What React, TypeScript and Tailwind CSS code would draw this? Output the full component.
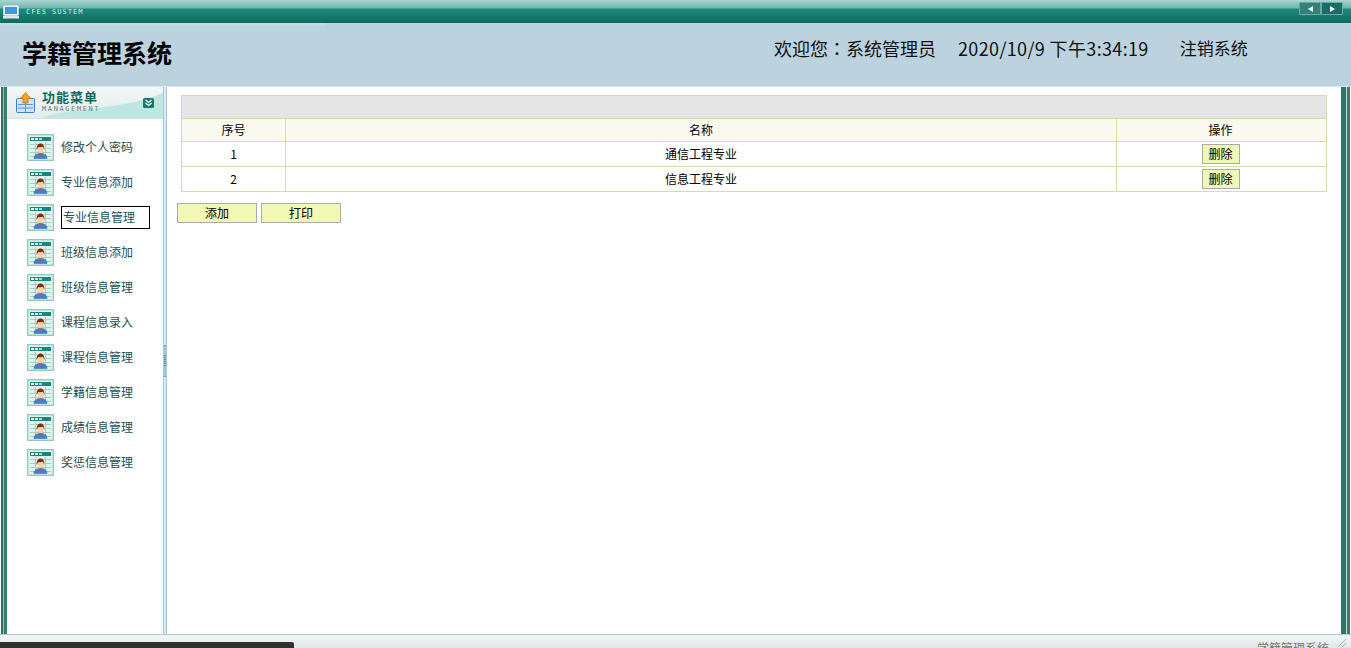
const menu = ["修改个人密码","专业信息添加","专业信息管理","班级信息添加","班级信息管理","课程信息录入","课程信息管理","学籍信息管理","成绩信息管理","奖惩信息管理"];
const cjk = { fontFamily: '"Noto Sans CJK SC","Liberation Sans",sans-serif' };

function PersonIcon() {
  return (
    <svg width="27" height="27" viewBox="0 0 27 27" className="shrink-0">
      <rect x="0.500" y="0.500" width="26" height="26" fill="#ffffff" stroke="#8fcac0" />
      <rect x="1.500" y="1.500" width="24" height="24" fill="#e4f1ec" stroke="#c4e3dc" />
      <rect x="3" y="3" width="21" height="4" fill="#15877c" />
      <rect x="4" y="4" width="3" height="2" fill="#fff" />
      <rect x="8" y="4" width="3" height="2" fill="#cfe" />
      <rect x="12" y="4" width="3" height="2" fill="#9dd" />
      <path d="M3 10.500H24M3 14.500H24M3 18.500H24M3 22.500H24M8.500 8V24M18.500 8V24" stroke="#a9cfc0" strokeWidth="1" />
      <path d="M7 24.500c0-3.500 2.500-5 6.500-5s6.500 1.500 6.500 5z" fill="#3d82d2" stroke="#2b62a8" strokeWidth="0.500" />
      <path d="M12.300 19.500l1.200 3.500 1.200-3.500z" fill="#e5473a" />
      <circle cx="13.500" cy="15.500" r="3.200" fill="#fbd3a5" />
      <path d="M9.800 16c-.6-4 1.200-6.500 3.700-6.500s4.300 2.500 3.700 6.500c-.3-1.800-.8-2.800-1.700-3.200-1.400.5-3 .5-4 .1-.8.6-1.400 1.500-1.700 3.100z" fill="#7a2e10" />
    </svg>
  );
}

export default function App() {
  return (
    <div className="h-[648px] w-[1351px] overflow-hidden flex flex-col bg-white text-[12px] text-black" style={cjk}>
      <div className="h-[23px] shrink-0 flex items-center bg-[linear-gradient(#a9d6d2_0,#6fb5ae_8px,#1f8a7e_9px,#0f6a5f_23px)]">
        <svg width="16" height="14" viewBox="0 0 16 14" className="ml-[3px]">
          <rect x="0.500" y="0.500" width="15" height="10" rx="1" fill="#e9f0f2" stroke="#c9d6da" />
          <rect x="2" y="2" width="12" height="7" fill="#3f9bd8" />
          <rect x="0" y="11" width="16" height="2.500" fill="#dfe6e8" />
        </svg>
        <span className="ml-[7px] mt-[1px] text-[7px] tracking-[1px] text-[#d8ece8]" style={{ fontFamily: '"DejaVu Sans Mono",monospace' }}>CFES SUSTEM</span>
        <div className="ml-auto mr-[8px] mb-[6px] flex">
          <div className="w-[22px] h-[13px] flex items-center justify-center border border-[#6fa9a3] bg-[#2f8379] rounded-l-[1px]">
            <div className="w-0 h-0 border-y-[3.500px] border-y-transparent border-r-[5px] border-r-white" />
          </div>
          <div className="w-[22px] h-[13px] flex items-center justify-center border border-[#6fa9a3] bg-[#1b6c68] rounded-r-[1px]">
            <div className="w-0 h-0 border-y-[3.500px] border-y-transparent border-l-[5px] border-l-white" />
          </div>
        </div>
      </div>

      <div className="relative h-[63px] shrink-0 flex items-center bg-[#bcd3df]">
        <div className="absolute left-0 top-0 w-[325px] h-[3px] bg-[#c6dae3]" />
        <div className="ml-[22px] mt-[-5px] text-[25px] font-bold leading-none">学籍管理系统</div>
        <div className="ml-[602px] mt-[-14px] text-[18px] leading-none text-[#111]">
          欢迎您<span style={{ fontFamily: '"Noto Sans CJK TC",sans-serif' }}>：</span>系统管理员
        </div>
        <div className="ml-[22px] mt-[-14px] text-[18px] leading-none tracking-[0.35px] text-[#111]">2020/10/9 下午3:34:19</div>
        <div className="ml-[31px] mt-[-14px] text-[17px] leading-none text-[#111]">注销系统</div>
      </div>

      <div className="h-[548px] shrink-0 flex border-t border-[#dbe7ec]">
        <div className="w-[1px] shrink-0" />
        <div className="w-[6px] shrink-0 flex">
          <div className="w-[2px] bg-[#2f7467]" />
          <div className="w-[1px] bg-[#8fbdb2]" />
          <div className="w-[3px] bg-[#3a7f72]" />
        </div>
        <div className="w-[156px] shrink-0 flex flex-col">
          <div className="relative h-[32px] shrink-0 flex items-center bg-gradient-to-b from-[#f4f6f6] to-[#e4ecec] border-b border-[#cfe3e0]">
            <svg width="156" height="31" viewBox="0 0 156 31" className="absolute left-0 top-0">
              <path d="M35 31C62 20 112 24 156 6V31z" fill="#bfe6e0" />
            </svg>
            <svg width="20" height="22" viewBox="0 0 20 22" className="relative ml-[9px]">
              <rect x="0.500" y="6.500" width="18" height="14" rx="1" fill="#cfe2f8" stroke="#3d7fd0" />
              <path d="M2 12.500H17M2 16H17M9.500 11V20" stroke="#5d96de" />
              <path d="M9.500 0.500L15 6.500H12V11H7V6.500H4z" fill="#f5a12b" stroke="#c9770f" strokeWidth="0.800" />
            </svg>
            <div className="relative ml-[6px]">
              <div className="text-[13px] font-bold leading-[14px] tracking-[1px] text-[#0e6a60] mt-[-2px]">功能菜单</div>
              <div className="text-[7px] leading-[8px] tracking-[1.600px] mt-[1px] text-[#66807f]" style={{ fontFamily: '"DejaVu Sans Mono",monospace' }}>MANAGEMENT</div>
            </div>
            <svg width="11" height="10" viewBox="0 0 11 10" className="relative ml-auto mr-[9px] mt-[1px]">
              <rect width="11" height="10" rx="1.500" fill="#14796f" />
              <path d="M2.500 2l3 2.500 3-2.500M2.500 5l3 2.500 3-2.500" fill="none" stroke="#fff" strokeWidth="1.300" />
            </svg>
          </div>
          <div className="flex flex-col gap-[8px] pt-[15px] pl-[20px]">
            {menu.map((m, i) => (
              <div key={m} className="h-[27px] flex items-center">
                <PersonIcon />
                {i === 2 ? (
                  <span className="ml-[7px] w-[89px] h-[23px] pl-[1px] pb-[1px] border border-black flex items-center text-[#1c4f55]">{m}</span>
                ) : (
                  <span className="ml-[7px] mt-[-2px] text-[#1c4f55]">{m}</span>
                )}
              </div>
            ))}
          </div>
        </div>

        <div className="w-[4px] shrink-0 bg-[#d8eaf6] border-x border-[#a8c6d6] flex items-center">
          <div className="w-full h-[32px] bg-[#9cc8e0] border-y border-[#6fa5c4] flex flex-col justify-center gap-[1px]">
            {[0,1,2,3,4,5].map((g) => <div key={g} className="h-[1px] bg-[#6d8a96]" />)}
          </div>
        </div>

        <div className="flex-1 pt-[8px] pl-[10px] pr-[13px]">
          <div className="ml-[4px] border border-[#d5dcaa]">
            <div className="h-[23px] bg-[#e5e5e5] border-b border-[#d5dcaa]" />
            <div className="grid grid-cols-[104px_831px_1fr] h-[23px] bg-[#f9f9f0] border-b border-[#d5dcaa] text-center leading-[22px]">
              <div className="border-r border-[#d5dcaa]">序号</div>
              <div className="border-r border-[#d5dcaa]">名称</div>
              <div className="pr-[2px]">操作</div>
            </div>
            {[["1","通信工程专业"],["2","信息工程专业"]].map(([n, name], i) => (
              <div key={n} className={`grid grid-cols-[104px_831px_1fr] text-center items-stretch ${i === 0 ? "h-[25px] border-b border-[#d5dcaa]" : "h-[24px]"}`}>
                <div className="border-r border-[#d5dcaa] flex items-center justify-center">{n}</div>
                <div className="border-r border-[#d5dcaa] flex items-center justify-center">{name}</div>
                <div className="flex items-center justify-center pr-[2px]">
                  <button className="w-[38px] h-[20px] bg-[#f2f7b5] border border-[#aaaaaa] text-[12px] leading-none">删除</button>
                </div>
              </div>
            ))}
          </div>
          <div className="flex gap-[4px] mt-[11px]">
            <button className="w-[80px] h-[20px] bg-[#f2f7b5] border border-[#aaaaaa] text-[12px] leading-none">添加</button>
            <button className="w-[80px] h-[20px] bg-[#f2f7b5] border border-[#aaaaaa] text-[12px] leading-none">打印</button>
          </div>
        </div>

        <div className="w-[1px] shrink-0" />
        <div className="w-[9px] shrink-0 flex">
          <div className="w-[5px] bg-[#2f7467]" />
          <div className="w-[1px] bg-[#c5ddd8]" />
          <div className="w-[3px] bg-[#3a7f72]" />
        </div>
        <div className="w-[1px] shrink-0" />
      </div>

      <div className="flex-1 relative border-t border-[#a9ccd2] bg-gradient-to-b from-[#f2f5f5] to-[#dfe7e8] overflow-hidden">
        <div className="absolute left-0 bottom-0 w-[294px] h-[6px] bg-[#303030] rounded-tr-[2px]" />
        <div className="absolute right-[22px] top-[6px] text-[12px] leading-[14px] text-[#777]">学籍管理系统</div>
        <svg width="10" height="10" viewBox="0 0 10 10" className="absolute right-[4px] top-[3px]">
          <path d="M1 9L9 1M5 9L9 5" stroke="#a5b0b0" strokeWidth="1" />
        </svg>
      </div>
    </div>
  );
}
